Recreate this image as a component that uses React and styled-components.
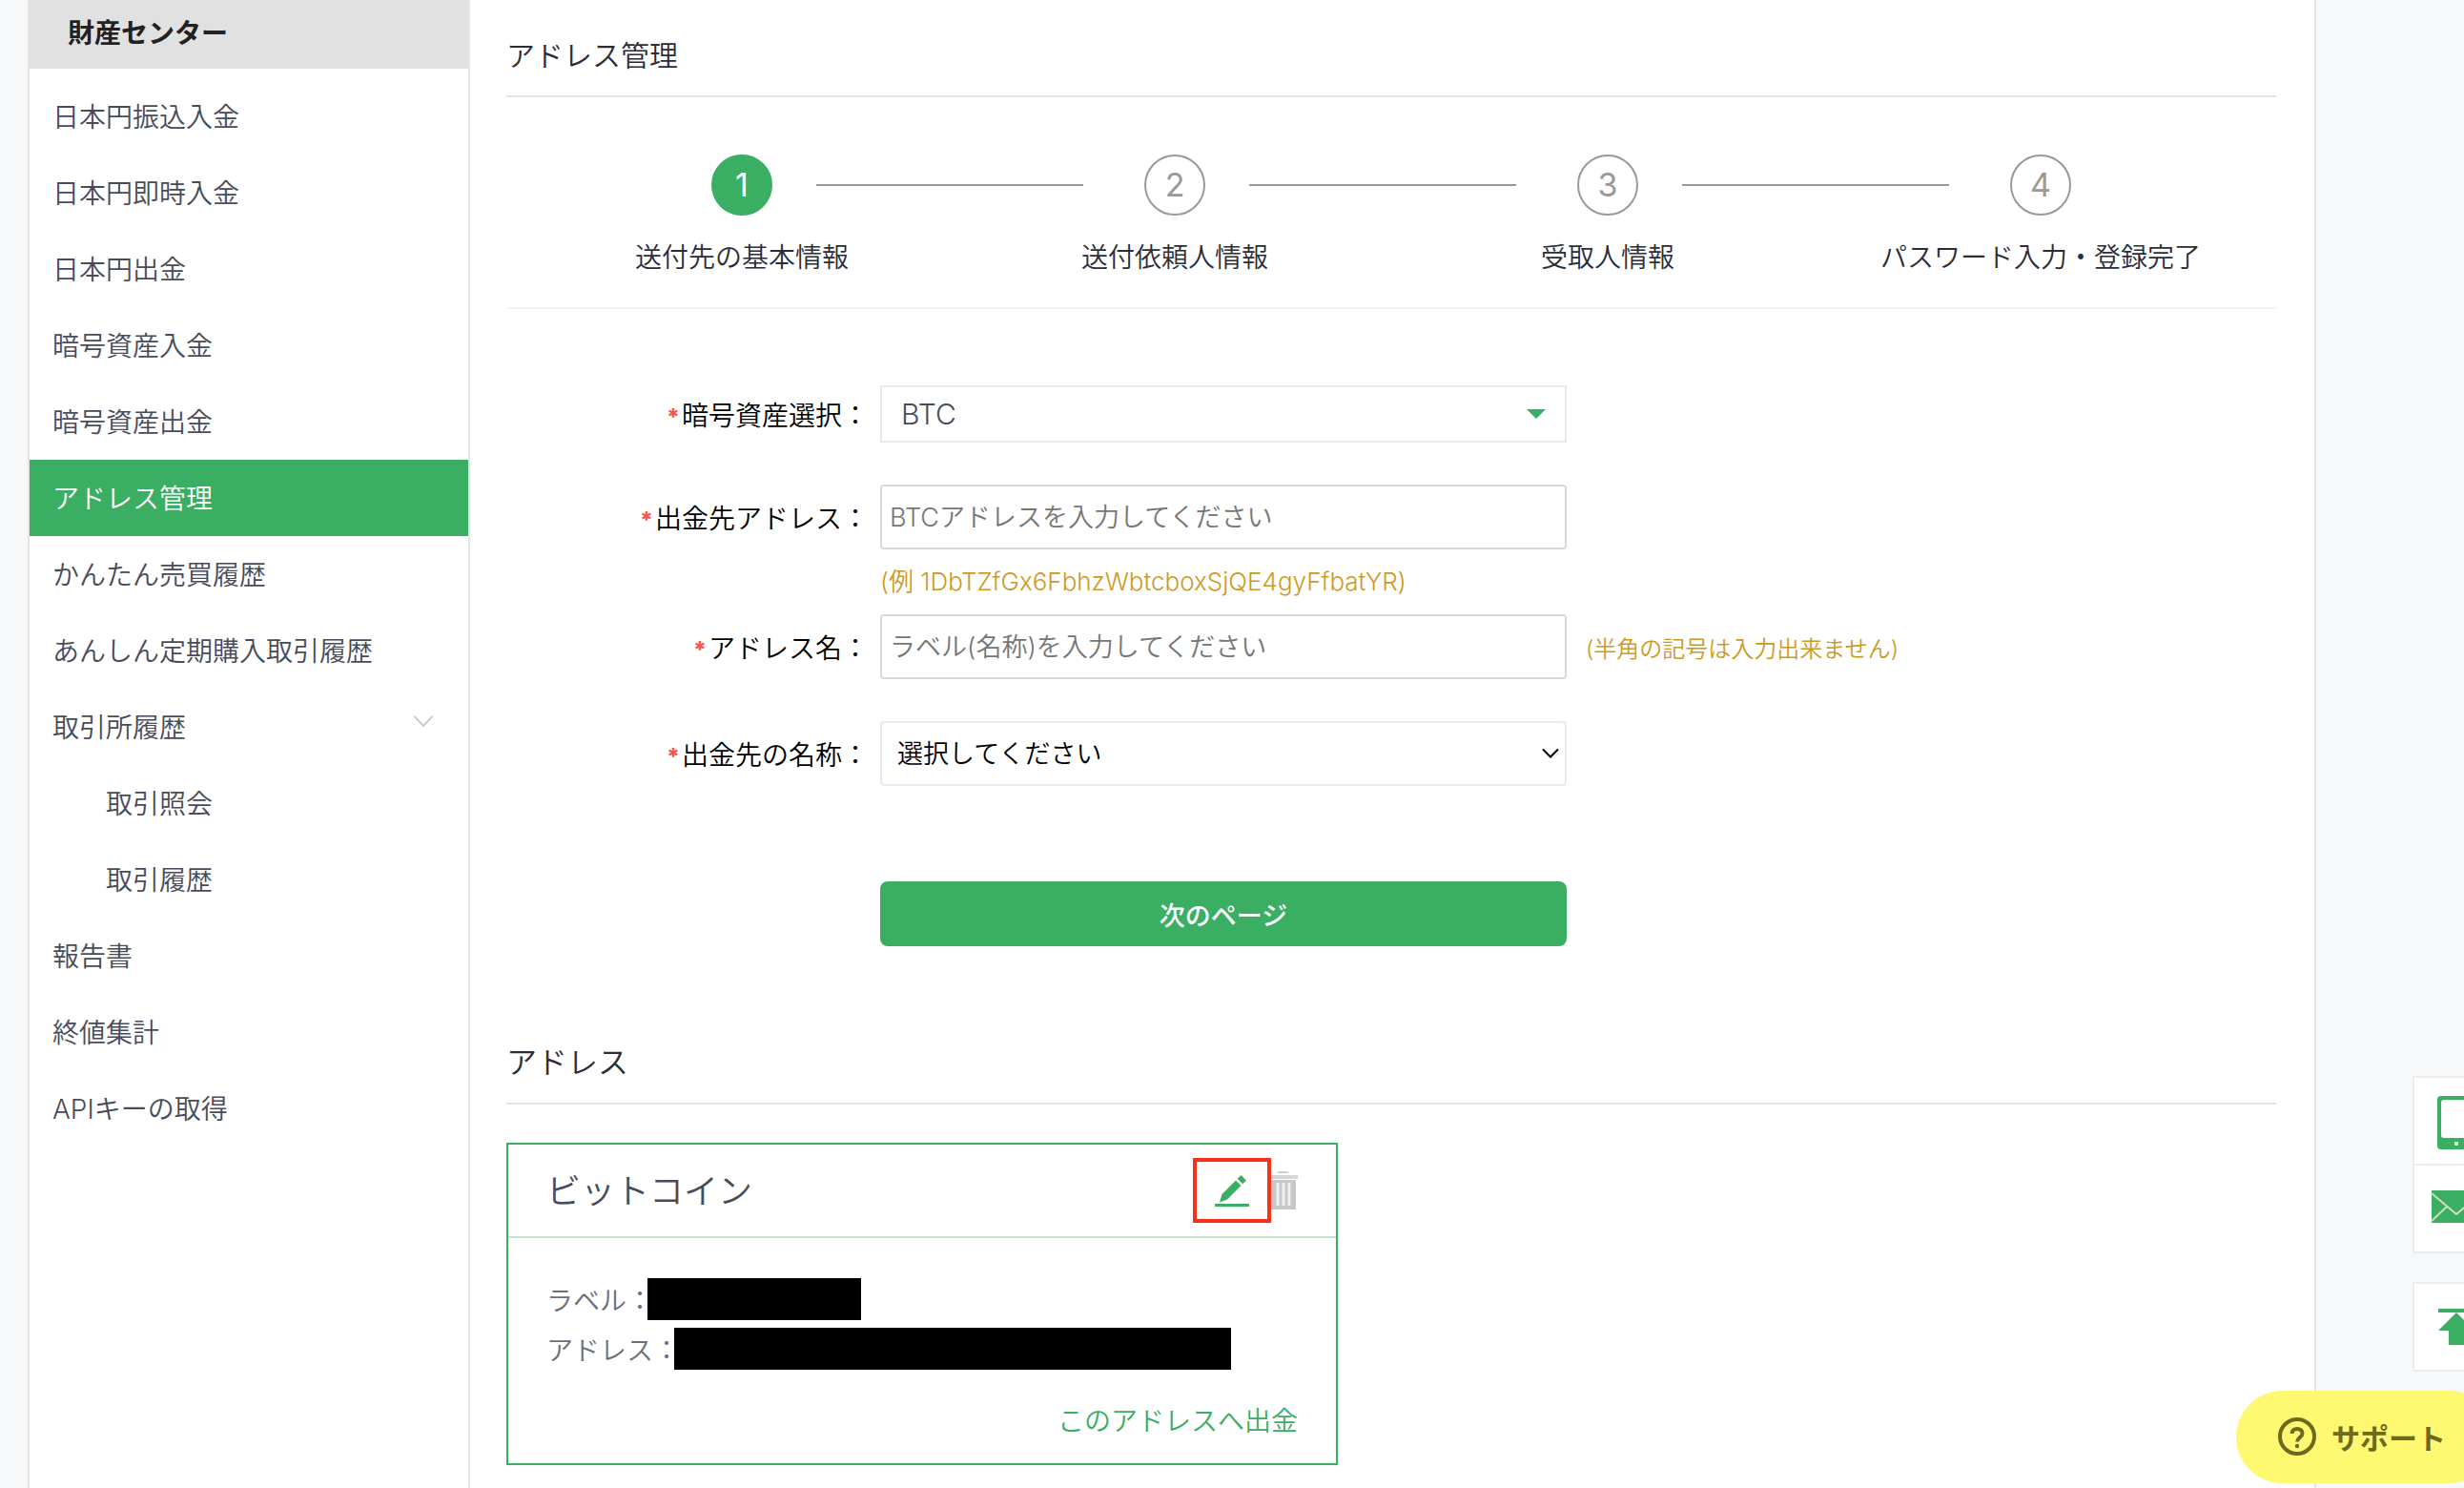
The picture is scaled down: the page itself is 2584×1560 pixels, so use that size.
import React from "react";
import styled, { createGlobalStyle, css } from "styled-components";

const color = {
  green: "#3aae62",
  page: "#f7f8fa",
  line: "#e5e5e5",
  menu: "#484b5a",
  heading: "#2b2d38",
  muted: "#999999",
  hint: "#cc9a24",
};

const GlobalStyle = createGlobalStyle`
  *, *::before, *::after { box-sizing: border-box; }
  html, body { margin: 0; background: ${color.page}; }
  body, button, input, select {
    font-family: "Inter", "Noto Sans CJK JP", sans-serif;
    font-weight: 350;
  }
  body { font-size: 28px; color: #000; overflow-x: hidden; }
  h1, h2, h3, ul, ol, dl, dd, p { margin: 0; padding: 0; font-weight: 350; }
  ul, ol { list-style: none; }
  a { color: inherit; text-decoration: none; }
`;

const Page = styled.div`
  display: flex;
  min-height: 100vh;
  margin: 0 155px 0 29px;
  background: #fff;
  border: solid ${color.line};
  border-width: 0 2px;
`;

const Sidebar = styled.nav`
  flex: 0 0 462px;
  border-right: 2px solid ${color.line};
`;

const SidebarTitle = styled.h2`
  padding: 0 40px 2px;
  line-height: 70px;
  font-size: 28px;
  font-weight: 700;
  color: #222;
  background: #e1e1e1;
`;

const Menu = styled.ul`
  padding-top: 10px;
`;

const MenuLink = styled.a`
  display: flex;
  justify-content: space-between;
  align-items: center;
  height: 80px;
  padding: 0 36px 2px ${(p) => (p.$nested ? 80 : 24)}px;
  color: ${(p) => (p.$active ? "#fff" : color.menu)};
  background: ${(p) => (p.$active ? color.green : "transparent")};
`;

const Main = styled.main`
  flex: 1;
  min-width: 0;
  padding: 16px 40px 24px 38px;
`;

const SectionTitle = styled.h2`
  line-height: 84px;
  font-size: ${(p) => (p.$large ? 32 : 30)}px;
  color: ${color.heading};
  border-bottom: 2px solid ${color.line};
`;

const Steps = styled.ol`
  display: grid;
  grid-template-columns: repeat(4, 1fr);
  padding: 60px 20px 32px;
  border-bottom: 2px solid #f3f3f3;
`;

const Step = styled.li`
  min-width: 0;
  text-align: center;
`;

const Track = styled.div`
  display: grid;
  grid-template-columns: 1fr 64px 1fr;
  align-items: center;
  margin-bottom: 24px;
`;

const Rail = styled.span`
  height: 2px;
  background: ${(p) => (p.$hidden ? "transparent" : color.muted)};
  ${(p) => (p.$before ? "margin-right: 64px;" : "margin-left: 46px;")}
`;

const Circle = styled.span`
  height: 64px;
  line-height: 60px;
  border: 2px solid ${(p) => (p.$active ? color.green : color.muted)};
  border-radius: 50%;
  font-size: 34px;
  font-weight: 400;
  color: ${(p) => (p.$active ? "#fff" : color.muted)};
  background: ${(p) => (p.$active ? color.green : "#fff")};
`;

const StepLabel = styled.div`
  line-height: 40px;
  color: ${color.heading};
  white-space: nowrap;
`;

const Form = styled.form`
  padding: 80px 0;
`;

const Field = styled.div`
  display: grid;
  grid-template-columns: 380px minmax(0, 720px) 1fr;
  align-items: center;
  margin-bottom: ${(p) => p.$gap || 0}px;
`;

const Label = styled.label`
  text-align: right;
  white-space: nowrap;
`;

const Star = styled.span`
  margin-right: 2px;
  font-size: 24px;
  font-weight: 800;
  color: #f95353;
`;

const Control = styled.div`
  position: relative;
  margin-left: 12px;
  margin-right: -12px;
`;

const box = css`
  display: block;
  width: 100%;
  background: #fff;
  outline: none;
`;

const TextInput = styled.input`
  ${box}
  height: 68px;
  padding: 0 8px;
  border: 2px solid #d9d9d9;
  border-radius: 4px;
  font-size: 27px;
  &::placeholder { color: #757575; opacity: 1; }
`;

const Select = styled.select`
  ${box}
  appearance: none;
  border: 2px solid #e9e9e9;
  ${(p) =>
    p.$square
      ? css`height: 60px; padding: 0 20px; font-size: 30px; color: ${color.menu};`
      : css`height: 68px; padding: 0 16px; border-radius: 4px; font-size: 27px; color: #000;`}
`;

const SelectMark = styled.svg`
  position: absolute;
  top: 0;
  bottom: 0;
  right: ${(p) => p.$right}px;
  margin: auto 0;
  pointer-events: none;
`;

const Hint = styled.p`
  grid-column: 2;
  padding-left: 12px;
  line-height: 68px;
  font-size: 26px;
  color: ${color.hint};
  white-space: nowrap;
`;

const Note = styled.p`
  padding-left: 32px;
  font-size: 24px;
  color: ${color.hint};
  white-space: nowrap;
`;

const SubmitButton = styled.button`
  ${box}
  height: 68px;
  border: 0;
  border-radius: 8px;
  font-size: 27px;
  font-weight: 500;
  color: #fff;
  background: ${color.green};
`;

const Card = styled.article`
  max-width: 872px;
  margin-top: 40px;
  border: 2px solid ${color.green};
`;

const CardHeader = styled.header`
  display: flex;
  align-items: center;
  height: 98px;
  padding: 0 40px;
  border-bottom: 2px solid #c0e7cd;
`;

const CardTitle = styled.h3`
  flex: 1;
  padding-bottom: 4px;
  font-size: 36px;
  color: ${color.menu};
`;

const IconButton = styled.button`
  display: grid;
  place-items: center;
  padding: 0;
  border: 0;
  background: none;
`;

const EditButton = styled(IconButton)`
  width: 82px;
  height: 68px;
  border: 4px solid #fa3119;
`;

const CardBody = styled.div`
  padding: 38px 40px 24px;
`;

const Detail = styled.div`
  display: flex;
  align-items: center;
  height: 52px;
  color: #6b6e7d;
`;

const Redacted = styled.dd`
  flex: 0 1 ${(p) => p.$width}px;
  height: 44px;
  && { margin-left: -6px; }
  background: #000;
`;

const WithdrawLink = styled.a`
  display: block;
  margin-top: 30px;
  line-height: 40px;
  text-align: right;
  color: ${color.green};
`;

/* Floating shortcuts that hang over the right edge of the window */
const Shortcuts = styled.aside`
  position: fixed;
  right: -38px;
  bottom: 122px;
  display: grid;
  gap: 30px;
  width: 92px;
`;

const ShortcutGroup = styled.div`
  background: #fff;
  border: 2px solid #ebecee;
`;

const Shortcut = styled.a`
  display: grid;
  place-items: center;
  height: 90px;
  & + & { height: 92px; border-top: 2px solid #ebecee; }
`;

const SupportButton = styled.button`
  position: fixed;
  right: -33px;
  bottom: 5px;
  display: flex;
  align-items: center;
  gap: 16px;
  width: 272px;
  height: 97px;
  padding: 0 0 2px 44px;
  border: 0;
  border-radius: 49px;
  font-size: 30px;
  font-weight: 700;
  color: #6d6a1f;
  background: #fff971;
`;

const menu = [
  { text: "日本円振込入金" },
  { text: "日本円即時入金" },
  { text: "日本円出金" },
  { text: "暗号資産入金" },
  { text: "暗号資産出金" },
  { text: "アドレス管理", active: true },
  { text: "かんたん売買履歴" },
  { text: "あんしん定期購入取引履歴" },
  { text: "取引所履歴", expandable: true },
  { text: "取引照会", nested: true },
  { text: "取引履歴", nested: true },
  { text: "報告書" },
  { text: "終値集計" },
  { text: "APIキーの取得" },
];

const steps = ["送付先の基本情報", "送付依頼人情報", "受取人情報", "パスワード入力・登録完了"];

const MenuChevron = () => (
  <svg width="22" height="22" viewBox="0 0 22 22" fill="none" stroke="#ccc" strokeWidth="2" aria-hidden="true">
    <path d="M1.5 1l9.5 10 9.5-10" />
  </svg>
);

const PencilIcon = () => (
  <svg width="36" height="34" viewBox="0 0 36 34" fill={color.green} aria-hidden="true">
    <path d="M0 31h36v3H0z" />
    <path d="M22 6.500l5.500 5.500L13 26.500 5 29.500 7.500 21z" />
    <path d="M27.500 1l5.500 5.500-3.800 3.800-5.500-5.500z" />
  </svg>
);

const TrashIcon = () => (
  <svg width="28" height="40" viewBox="0 0 28 40" aria-hidden="true">
    <path d="M6 2l2-2h9l2 2z" fill="#cfcfcf" />
    <path d="M0 4h28v4H0z" fill="#d6d6d6" />
    <path d="M0 9h26v31H0z" fill="#c8c8c8" />
    <path d="M5.500 12h3v24h-3zM11.500 12h3v24h-3zM17.500 12h3v24h-3z" fill="#f0f0f0" />
  </svg>
);

const PhoneIcon = () => (
  <svg width="40" height="60" viewBox="0 -4 40 60" aria-hidden="true">
    <rect width="40" height="56" rx="4" fill={color.green} />
    <rect x="4" y="4" width="32" height="40" rx="3" fill="#fff" />
    <rect x="18" y="48" width="4" height="4" rx="1" fill="#d8f0e0" />
  </svg>
);

const MailIcon = () => (
  <svg width="52" height="38" viewBox="0 0 52 38" fill="none" aria-hidden="true">
    <path d="M0 0h52v34H0z" fill={color.green} />
    <path d="M0 3l26 22L52 3M0 32l16-15M52 32L36 17" stroke="#d4dcc4" strokeWidth="2" />
  </svg>
);

const TopIcon = () => (
  <svg width="38" height="38" viewBox="0 0 38 38" fill={color.green} aria-hidden="true">
    <path d="M0 0h38v4H0z" />
    <path d="M19 4l19 19H27v15H11V23H0z" />
  </svg>
);

const HelpIcon = () => (
  <svg width="40" height="40" viewBox="0 0 40 40" fill="none" stroke="#6d6a1f" strokeWidth="4" aria-hidden="true">
    <circle cx="20" cy="20" r="18" />
    <path d="M14.500 17c0-3.200 2.300-5 5.500-5s5.500 1.900 5.500 4.800c0 4-5.500 4.400-5.500 8.700" />
    <circle cx="20" cy="30" r="2.200" fill="#6d6a1f" stroke="none" />
  </svg>
);

function FieldLabel({ htmlFor, children }) {
  return (
    <Label htmlFor={htmlFor}>
      <Star>*</Star>
      {children}：
    </Label>
  );
}

export default function App() {
  return (
    <>
      <GlobalStyle />
      <Page>
        <Sidebar>
          <SidebarTitle>財産センター</SidebarTitle>
          <Menu>
            {menu.map((item) => (
              <li key={item.text}>
                <MenuLink href="#" $active={item.active} $nested={item.nested}>
                  {item.text}
                  {item.expandable && <MenuChevron />}
                </MenuLink>
              </li>
            ))}
          </Menu>
        </Sidebar>

        <Main>
          <SectionTitle as="h1">アドレス管理</SectionTitle>
          <Steps>
            {steps.map((label, i) => (
              <Step key={label}>
                <Track>
                  <Rail $before $hidden={i === 0} />
                  <Circle $active={i === 0}>{i + 1}</Circle>
                  <Rail $hidden={i === steps.length - 1} />
                </Track>
                <StepLabel>{label}</StepLabel>
              </Step>
            ))}
          </Steps>

          <Form onSubmit={(e) => e.preventDefault()}>
            <Field $gap={44}>
              <FieldLabel htmlFor="coin">暗号資産選択</FieldLabel>
              <Control>
                <Select id="coin" $square>
                  <option>BTC</option>
                </Select>
                <SelectMark $right={22} width="20" height="10" viewBox="0 0 20 10" fill={color.green}>
                  <path d="M0 0h20L10 10z" />
                </SelectMark>
              </Control>
            </Field>
            <Field>
              <FieldLabel htmlFor="address">出金先アドレス</FieldLabel>
              <Control>
                <TextInput id="address" placeholder="BTCアドレスを入力してください" />
              </Control>
              <Hint>(例 1DbTZfGx6FbhzWbtcboxSjQE4gyFfbatYR)</Hint>
            </Field>
            <Field $gap={44}>
              <FieldLabel htmlFor="label">アドレス名</FieldLabel>
              <Control>
                <TextInput id="label" placeholder="ラベル(名称)を入力してください" />
              </Control>
              <Note>(半角の記号は入力出来ません)</Note>
            </Field>
            <Field $gap={100}>
              <FieldLabel htmlFor="exchange">出金先の名称</FieldLabel>
              <Control>
                <Select id="exchange">
                  <option>選択してください</option>
                </Select>
                <SelectMark $right={8} width="18" height="12" viewBox="0 0 18 12" fill="none" stroke="#000" strokeWidth="2">
                  <path d="M1 1.500l8 8 8-8" />
                </SelectMark>
              </Control>
            </Field>
            <Field>
              <span />
              <Control>
                <SubmitButton type="submit">次のページ</SubmitButton>
              </Control>
            </Field>
          </Form>

          <SectionTitle $large>アドレス</SectionTitle>
          <Card>
            <CardHeader>
              <CardTitle>ビットコイン</CardTitle>
              <EditButton type="button" aria-label="編集">
                <PencilIcon />
              </EditButton>
              <IconButton type="button" aria-label="削除">
                <TrashIcon />
              </IconButton>
            </CardHeader>
            <CardBody>
              <dl>
                <Detail>
                  <dt>ラベル：</dt>
                  <Redacted $width={224} />
                </Detail>
                <Detail>
                  <dt>アドレス：</dt>
                  <Redacted $width={584} />
                </Detail>
              </dl>
              <WithdrawLink href="#">このアドレスへ出金</WithdrawLink>
            </CardBody>
          </Card>
        </Main>
      </Page>

      <Shortcuts>
        <ShortcutGroup>
          <Shortcut href="#" aria-label="アプリ">
            <PhoneIcon />
          </Shortcut>
          <Shortcut href="#" aria-label="メール">
            <MailIcon />
          </Shortcut>
        </ShortcutGroup>
        <ShortcutGroup>
          <Shortcut href="#" aria-label="トップへ戻る">
            <TopIcon />
          </Shortcut>
        </ShortcutGroup>
      </Shortcuts>
      <SupportButton type="button">
        <HelpIcon />
        サポート
      </SupportButton>
    </>
  );
}
